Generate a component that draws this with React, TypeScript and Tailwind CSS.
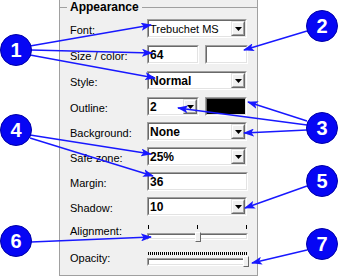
import type { ReactNode } from 'react'

const font = { fontFamily: '"Liberation Sans", Arial, sans-serif' }

// classic windows sunken edge: two 1px rings
function Sunken({ className = '', dark = false, children }: { className?: string; dark?: boolean; children?: ReactNode }) {
  return (
    <div className={`border border-t-[#a0a0a0] border-l-[#a0a0a0] border-b-white border-r-white ${className}`}>
      <div
        className={`flex h-full border border-t-[#696969] border-l-[#696969] border-b-[#e3e3e3] border-r-[#e3e3e3] ${
          dark ? 'bg-black' : 'bg-white'
        }`}
      >
        {children}
      </div>
    </div>
  )
}

function DropButton() {
  return (
    <div className="h-full w-[14px] border border-t-[#e3e3e3] border-l-[#e3e3e3] border-b-[#696969] border-r-[#696969]">
      <div className="flex h-full items-center justify-center border border-t-white border-l-white border-b-[#a0a0a0] border-r-[#a0a0a0] bg-[#f0f0f0]">
        <svg width="7" height="4" viewBox="0 0 7 4">
          <polygon points="0,0 7,0 3.5,4" fill="#000" />
        </svg>
      </div>
    </div>
  )
}

function Value({ text, bold = true }: { text: string; bold?: boolean }) {
  return (
    <span
      className={`flex-1 truncate pl-[1px] pt-[1px] leading-[14px] text-black ${
        bold ? 'text-[12px] font-bold' : 'text-[11px]'
      }`}
    >
      {text}
    </span>
  )
}

function Combo({ value, bold = true, w = 'w-[100px]' }: { value: string; bold?: boolean; w?: string }) {
  return (
    <Sunken className={`h-[19px] ${w}`}>
      <Value text={value} bold={bold} />
      <DropButton />
    </Sunken>
  )
}

function Row({ label, mt, children }: { label: string; mt: string; children: ReactNode }) {
  return (
    <div className={`flex h-[19px] ${mt}`}>
      <span className="w-[77px] pt-[3px] text-[11px] leading-[16px] text-black">{label}</span>
      <div className="flex">{children}</div>
    </div>
  )
}

function Slider({ thumbLeft, dense = false }: { thumbLeft: number; dense?: boolean }) {
  return (
    <div className="relative flex w-[101px] flex-col">
      {dense ? (
        <div className="mx-[1px] mt-[2px] h-[3px] bg-[repeating-linear-gradient(90deg,#000_0_1px,transparent_1px_2px)]" />
      ) : (
        <div className="mt-[2px] flex h-[4px] justify-between px-[1px]">
          <div className="w-px bg-black" />
          <div className="w-px bg-black" />
          <div className="w-px bg-black" />
        </div>
      )}
      <div
        className={`${dense ? 'mt-[3px] h-[8px]' : 'mt-[4px] h-[7px]'} border border-t-[#a0a0a0] border-l-[#a0a0a0] border-b-white border-r-white`}
      >
        <div className="h-full border border-t-[#696969] border-l-[#696969] border-b-[#e3e3e3] border-r-[#e3e3e3] bg-white" />
      </div>
      <div
        className={`absolute w-[6px] border border-t-white border-l-white border-b-[#696969] border-r-[#696969] bg-[#f0f0f0] ${
          dense ? 'top-[6px] h-[11px]' : 'top-[9px] h-[10px]'
        }`}
        style={{ left: thumbLeft }}
      />
    </div>
  )
}

const lines = [
  [30, 46, 151, 25],
  [31, 50, 152, 53],
  [30, 55, 155, 78],
  [307, 31, 244, 50],
  [307, 121, 248, 102],
  [307, 125, 178, 108],
  [307, 130, 244, 133],
  [30, 135, 151, 154],
  [30, 138, 153, 176],
  [307, 186, 245, 208],
  [31, 242, 151, 237],
  [307, 250, 252, 263],
]

const badges = [
  { n: '1', x: 16, y: 50 },
  { n: '2', x: 322, y: 26 },
  { n: '3', x: 322, y: 128 },
  { n: '4', x: 16, y: 130 },
  { n: '5', x: 322, y: 181 },
  { n: '6', x: 16, y: 241 },
  { n: '7', x: 322, y: 244 },
]

export default function App() {
  return (
    <div className="relative h-[278px] w-[338px] overflow-hidden bg-white" style={font}>
      <div className="ml-[59px] flex h-[276px] w-[199px] flex-col border-x border-b border-[#a0a0a0] bg-[#f0f0f0]">
        <div className="flex h-[14px] items-center">
          <div className="h-px w-[7px] bg-[#a0a0a0]" />
          <span className="px-[3px] text-[12px] font-bold leading-[14px] text-black">Appearance</span>
          <div className="h-px flex-1 bg-[#a0a0a0]" />
        </div>

        <div className="flex flex-col pl-[10px]">
          <Row label="Font:" mt="mt-[5px]">
            <Combo value="Trebuchet MS" bold={false} />
          </Row>
          <Row label="Size / color:" mt="mt-[7px]">
            <Sunken className="h-[19px] w-[52px]">
              <Value text="64" />
            </Sunken>
            <Sunken className="ml-[6px] h-[19px] w-[43px]" />
          </Row>
          <Row label="Style:" mt="mt-[7px]">
            <Combo value="Normal" />
          </Row>
          <Row label="Outline:" mt="mt-[7px]">
            <Combo value="2" w="w-[52px]" />
            <Sunken className="ml-[6px] h-[19px] w-[42px]" dark />
          </Row>
          <Row label="Background:" mt="mt-[6px]">
            <Combo value="None" />
          </Row>
          <Row label="Safe zone:" mt="mt-[6px]">
            <Combo value="25%" />
          </Row>
          <Row label="Margin:" mt="mt-[6px]">
            <Sunken className="h-[19px] w-[101px]">
              <Value text="36" />
            </Sunken>
          </Row>
          <Row label="Shadow:" mt="mt-[6px]">
            <Combo value="10" />
          </Row>

          <div className="mt-[7px] flex h-[20px]">
            <span className="w-[77px] text-[11px] leading-[16px] text-black">Alignment:</span>
            <Slider thumbLeft={48} />
          </div>
          <div className="mt-[7px] flex h-[18px]">
            <span className="w-[77px] text-[11px] leading-[16px] text-black">Opacity:</span>
            <Slider thumbLeft={96} dense />
          </div>
        </div>
      </div>

      <svg className="pointer-events-none absolute inset-0" width="338" height="278" viewBox="0 0 338 278">
        <defs>
          <marker id="ah" markerWidth="11" markerHeight="8" refX="10" refY="4" orient="auto" markerUnits="userSpaceOnUse">
            <path d="M0,0 L11,4 L0,8 L2.5,4 Z" fill="#1818ff" />
          </marker>
        </defs>
        {lines.map(([x1, y1, x2, y2], i) => (
          <line key={i} x1={x1} y1={y1} x2={x2} y2={y2} stroke="#1818ff" strokeWidth="1.4" markerEnd="url(#ah)" />
        ))}
        {badges.map((b) => (
          <g key={b.n}>
            <circle cx={b.x} cy={b.y} r="15.5" fill="#0606f4" stroke="#0000a8" strokeWidth="1" />
            <text
              x={b.x}
              y={b.y + 7}
              textAnchor="middle"
              fill="#fff"
              fontSize="20"
              fontWeight="bold"
              fontFamily='"Liberation Sans", Arial, sans-serif'
            >
              {b.n}
            </text>
          </g>
        ))}
      </svg>
    </div>
  )
}
